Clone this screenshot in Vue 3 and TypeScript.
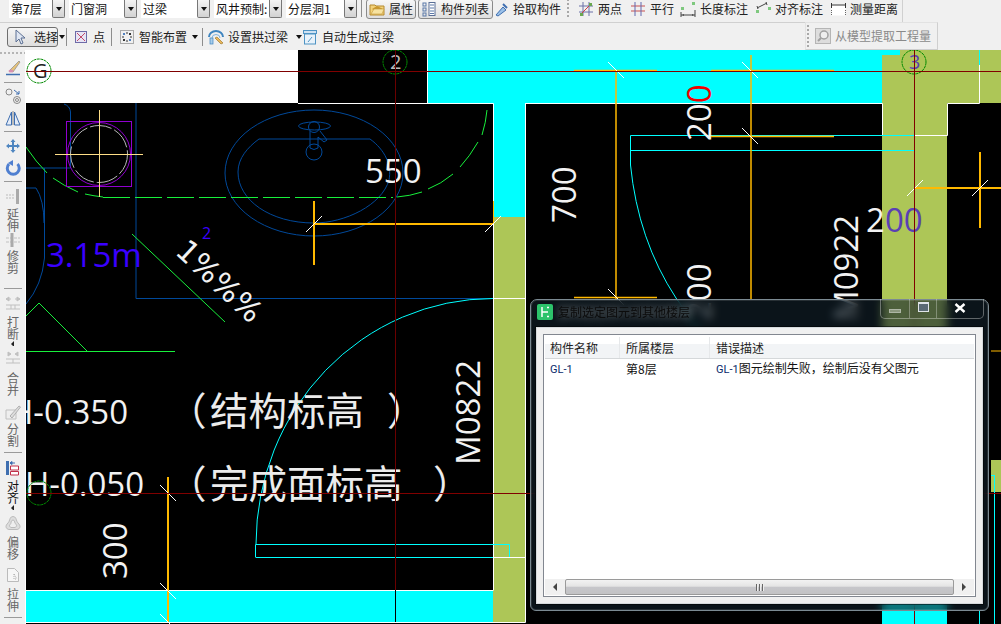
<script setup lang="ts">
const icons: Record<string, string> = {
  folder: '<path d="M1 4h5l1 1h8v9H1z" fill="#f3d27a" stroke="#b58a30"/><path d="M3 8l5-3 6 3-5 4z" fill="#c9982f"/><path d="M2 13l3-5h10l-2 5z" fill="#f7e3a1" stroke="#c49a3c" stroke-width=".6"/>',
  list: '<rect x="2" y="2" width="3" height="3" fill="none" stroke="#5a78a8"/><rect x="2" y="7" width="3" height="3" fill="none" stroke="#5a78a8"/><rect x="2" y="12" width="3" height="3" fill="none" stroke="#5a78a8"/><rect x="8" y="1.5" width="6" height="13" fill="#fff" stroke="#5a6f96"/><path d="M9 4h4M9 7h4M9 10h4M9 12.500h4" stroke="#5a78a8"/>',
  pick: '<path d="M3 14l7-8 3 3-8 6z" fill="#9ac0e8" stroke="#3f6fb0"/><path d="M10 3l4 4" stroke="#3f6fb0" stroke-width="2"/>',
  twoPt: '<path d="M5 1v14M11 1v14M1 5h14M1 11h14" stroke="#6b70a8"/><path d="M2 14L14 2" stroke="#d04040"/><rect x="2" y="12" width="3" height="3" fill="#6aa84f"/><rect x="11" y="2" width="3" height="3" fill="#6aa84f"/>',
  parallel: '<path d="M1 5h14M1 10h14" stroke="#c85050"/><path d="M5 1v14M11 1v14" stroke="#6068b0"/>',
  lenDim: '<rect x="12" y="1" width="3" height="3" fill="#7fc97f"/><rect x="1" y="6" width="3" height="3" fill="#7fc97f"/><path d="M1 11v5M15 9v7M1 14h14" stroke="#444"/><path d="M2 14l2-1v2zM14 14l-2-1v2z" fill="#444"/>',
  alignDim: '<rect x="1" y="9" width="3" height="3" fill="#7fc97f"/><rect x="13" y="6" width="3" height="3" fill="#7fc97f"/><path d="M2 7L12 2M2 5l1 3M11 1l1 3" stroke="#444"/>',
  measure: '<rect x="1.500" y="3.500" width="14" height="11" fill="#fff" stroke="none"/><path d="M1.500 2v5M15.500 2v5M2 4h13" stroke="#333"/><path d="M1.500 9v6" stroke="#666" stroke-dasharray="1 1"/><path d="M15.500 9v6" stroke="#666" stroke-dasharray="1 1"/>',
  cursor: '<path d="M5 1v12l3-3 2 5 2-1-2-5h4z" fill="#dfe6f2" stroke="#5b6f93"/>',
  point: '<rect x="2.500" y="2.500" width="11" height="11" fill="#e7e4f4" stroke="#6e6ba8"/><path d="M4 4l8 8M12 4l-8 8" stroke="#c14a6a"/>',
  smart: '<rect x="1.500" y="1.500" width="13" height="13" fill="none" stroke="#666" stroke-dasharray="1 1"/><path d="M8 3v2M8 11v2M3 8h2M11 8h2" stroke="#333"/><rect x="4" y="4" width="2" height="2" fill="#4f81c0"/><rect x="10" y="10" width="2" height="2" fill="#4f81c0"/><rect x="10" y="4" width="2" height="2" fill="#333"/><rect x="4" y="10" width="2" height="2" fill="#333"/>',
  arch: '<path d="M1 8a7 6 0 0 1 14 0" fill="none" stroke="#3f85c0" stroke-width="2"/><path d="M4 9a4 3.500 0 0 1 8 0" fill="none" stroke="#7fb3df"/><rect x="2" y="9" width="3" height="6" fill="#a8cdea" stroke="#3f85c0" stroke-width=".7"/><path d="M7 9l6 6 2-1-6-6z" fill="#e9b85a" stroke="#a07a30" stroke-width=".7"/>',
  auto: '<rect x="1.500" y="1.500" width="13" height="3" fill="#cfe2f3" stroke="#4f94c4"/><rect x="2.500" y="5" width="11" height="10" fill="#e8f2fa" stroke="#4f94c4"/><path d="M6 13l4-5" stroke="#4f94c4"/>',
  extract: '<rect x=".5" y=".5" width="15" height="15" fill="#ddd" stroke="#b5b5b5"/><circle cx="9" cy="7" r="4" fill="#eee" stroke="#a0a0a0" stroke-width="1.500"/><path d="M6 10l-3 3" stroke="#a0a0a0" stroke-width="2"/>',
  brush: '<path d="M5 10L14 1l1 1-7 10z" fill="#e6c37a" stroke="#8a8a8a" stroke-width=".7"/><ellipse cx="6" cy="11" rx="2.500" ry="1.500" fill="#d890b0"/><path d="M1 14.500h14" stroke="#3f6fb0" stroke-width="1.500"/>',
  offsetC: '<circle cx="4" cy="4" r="3" fill="none" stroke="#888"/><circle cx="12" cy="12" r="3.500" fill="none" stroke="#888"/><circle cx="12" cy="12" r="1.500" fill="none" stroke="#888"/><path d="M9 2l5 4M14 3v3h-3" fill="none" stroke="#3f6fb0"/>',
  mirror: '<path d="M6.500 2v13H1zM9.500 2v13H15z" fill="#e4ecf8" stroke="#3f6fb0"/><path d="M8 1v14" stroke="#888"/>',
  move: '<path d="M8 1l2.500 3h-5zM8 15l2.500-3h-5zM1 8l3-2.500v5zM15 8l-3-2.500v5z" fill="#4f86c0"/><path d="M8 3v10M3 8h10" stroke="#4f86c0" stroke-width="2"/>',
  rotate: '<path d="M4 4a6 6 0 1 0 8.500 0" fill="none" stroke="#4f7fd0" stroke-width="3"/><path d="M8 0v6L3 3z" fill="#4f7fd0"/>',
  extend: '<path d="M1 7h9M1 10h9" stroke="#bbb" stroke-dasharray="2 1"/><path d="M12.500 1v15" stroke="#aaa" stroke-width="3"/>',
  trim: '<path d="M1 5h14M1 9h14" stroke="#c0c0c0" stroke-dasharray="3 1"/><path d="M7 0v14" stroke="#aaa" stroke-width="3"/>',
  breakI: '<path d="M1 3l3-2v4zM15 3l-3-2v4zM1 3h5M15 3h-5M1 9h14M1 13h14M6 9v4M10 9v4" stroke="#c0c0c0" fill="#c0c0c0"/>',
  merge: '<path d="M6 3L3 1v4zM10 3l3-2v4zM1 8h14M1 12h14M8 8v4" stroke="#c0c0c0" fill="#c0c0c0"/>',
  split: '<path d="M1 6h10v9H1z" fill="#eee" stroke="#c0c0c0"/><path d="M5 12L14 2l1.500 1L7 14z" fill="#ddd" stroke="#b0b0b0"/>',
  align: '<rect x="1" y="1" width="3" height="14" fill="#3f6fb0"/><path d="M5.500 6h8v4h-8z" fill="#fff" stroke="#c0304a"/><path d="M5.500 11.500h8v3.500h-8z" fill="#fff" stroke="#c0304a"/><path d="M5 3h5M5 3l2-1.500v3z" stroke="#3f6fb0" fill="#3f6fb0"/>',
  offsetP: '<path d="M8 1.500c3 0 3 3 4 5s3 3 3 5-2 3-3 3H4c-1 0-3-1-3-3s2-3 3-5 1-5 4-5z" fill="#ddd" stroke="#bbb"/><path d="M8 5c1.500 0 1.500 2 2 3s2 2 1.500 3-1 1.500-1.500 1.500H6c-.5 0-1-.5-1.500-1.500S6 9 6 8s.5-3 2-3z" fill="#eee" stroke="#bbb"/>',
  stretch: '<path d="M2.500 1.500h7l4 4v9h-11z" fill="#f6f6f6" stroke="#bbb"/><path d="M9 7v5h3M9 7l3 5" stroke="#aaa" stroke-dasharray="1 1" fill="none"/>'
}

const combos = [
  { label: '第7层', w: 56 },
  { label: '门窗洞', w: 68 },
  { label: '过梁', w: 69 },
  { label: '风井预制:', w: 68 },
  { label: '分层洞1', w: 71 }
]

type RailItem =
  | { sep: true; h: number }
  | { sep?: false; icon: string; h: number; iconH: number; text?: string; caret?: boolean; dark?: boolean }

const rail: RailItem[] = [
  { icon: 'brush', h: 24, iconH: 24 },
  { sep: true, h: 4 },
  { icon: 'offsetC', h: 24, iconH: 24 },
  { icon: 'mirror', h: 20, iconH: 20 },
  { sep: true, h: 6 },
  { icon: 'move', h: 24, iconH: 24 },
  { icon: 'rotate', h: 20, iconH: 20 },
  { sep: true, h: 6 },
  { icon: 'extend', h: 48, iconH: 24, text: '延伸' },
  { icon: 'trim', h: 52, iconH: 18, text: '修剪' },
  { sep: true, h: 8 },
  { icon: 'breakI', h: 54, iconH: 24, text: '打断', caret: true },
  { icon: 'merge', h: 54, iconH: 26, text: '合并' },
  { icon: 'split', h: 48, iconH: 23, text: '分割' },
  { sep: true, h: 8 },
  { icon: 'align', h: 54, iconH: 24, text: '对齐', caret: true, dark: true },
  { icon: 'offsetP', h: 52, iconH: 26, text: '偏移' },
  { icon: 'stretch', h: 52, iconH: 26, text: '拉伸' },
  { sep: true, h: 6 }
]

const greenSegs = [
  'M26 147Q36 162 47 173', 'M53 178Q64 186 78 192', 'M85 194Q94 196 103 197',
  'M397 197Q410 196 422 192', 'M428 189Q441 184 453 174', 'M460 167Q470 156 478 142', 'M482 135Q486 122 487 110'
]
const ticksBack = [[616, 70], [750, 70], [750, 136], [616, 297], [168, 493], [168, 591], [168, 622]]
const ticksFwd = [[314, 224], [493, 224], [915, 188], [980, 188]]
</script>

<template>
  <div class="app">
    <div class="bar bar1">
      <div v-for="c in combos" :key="c.label" class="combo" :style="{ width: c.w + 'px' }">
        <span class="combo-field">{{ c.label }}</span>
        <span class="combo-btn"><i class="tri"></i></span>
      </div>
      <span class="vsep first"></span>
      <button class="tool on prop"><svg viewBox="0 0 16 16" v-html="icons.folder"></svg>属性</button>
      <button class="tool on lst"><svg viewBox="0 0 16 16" v-html="icons.list"></svg>构件列表</button>
      <span class="tool pickup"><svg viewBox="0 0 16 16" v-html="icons.pick"></svg>拾取构件</span>
      <span class="grip"></span>
      <span class="tool two"><svg viewBox="0 0 16 16" v-html="icons.twoPt"></svg>两点</span>
      <span class="tool par"><svg viewBox="0 0 16 16" v-html="icons.parallel"></svg>平行</span>
      <span class="tool dim"><svg viewBox="0 0 16 16" v-html="icons.lenDim"></svg>长度标注</span>
      <span class="tool dim"><svg viewBox="0 0 16 16" v-html="icons.alignDim"></svg>对齐标注</span>
      <span class="tool dim"><svg viewBox="0 0 16 16" v-html="icons.measure"></svg>测量距离</span>
    </div>

    <div class="bar bar2">
      <button class="select"><svg viewBox="0 0 16 16" v-html="icons.cursor"></svg>选择</button>
      <i class="tri drop"></i>
      <span class="vsep lead"></span>
      <span class="tool pt"><svg viewBox="0 0 16 16" v-html="icons.point"></svg>点</span>
      <span class="vsep"></span>
      <span class="tool sm"><svg viewBox="0 0 16 16" v-html="icons.smart"></svg>智能布置<i class="tri"></i></span>
      <span class="vsep"></span>
      <span class="tool ar"><svg viewBox="0 0 16 16" v-html="icons.arch"></svg>设置拱过梁<i class="tri"></i></span>
      <span class="tool au"><svg viewBox="0 0 16 16" v-html="icons.auto"></svg>自动生成过梁</span>
      <div class="extract">
        <span class="grip"></span>
        <span class="tool ex"><svg viewBox="0 0 16 16" v-html="icons.extract"></svg>从模型提取工程量</span>
      </div>
    </div>

    <div class="main">
      <aside class="rail">
        <div class="rail-grip"></div>
        <template v-for="(it, i) in rail" :key="i">
          <div v-if="it.sep" class="rail-sep" :style="{ height: it.h + 'px' }"><span></span></div>
          <div v-else class="rail-item" :class="{ dark: it.dark }" :style="{ height: it.h + 'px' }">
            <div class="rail-icon" :style="{ height: it.iconH + 'px' }">
              <svg viewBox="0 0 16 16" v-html="icons[it.icon]"></svg>
            </div>
            <span v-if="it.text" class="rail-text">{{ it.text }}</span>
            <i v-if="it.caret" class="tri-left"></i>
          </div>
        </template>
      </aside>

      <svg class="cad" viewBox="26 50 975 574" width="975" height="574">
        <rect x="26" y="50" width="975" height="574" fill="#000" />
        <rect x="26" y="50" width="272" height="53" fill="#fff" />
        <rect x="427" y="50" width="473" height="53" fill="#0ff" />
        <rect x="493" y="103" width="32" height="114" fill="#0ff" />
        <rect x="493" y="217" width="32" height="405" fill="#adc657" />
        <rect x="26" y="590" width="467" height="32" fill="#0ff" />
        <path d="M900 50H1001V103H979V103H947V590H882V55H900Z" fill="#adc657" />
        <rect x="882" y="590" width="65" height="34" fill="#0ff" />
        <rect x="991" y="460" width="10" height="32" fill="#adc657" />

        <g fill="none" stroke="#fff" stroke-width="1">
          <path d="M298 103.500H493.500V590.500M525.500 103.500V622.500H26M26 590.500H493M493 298.500H525M493 557.500H525M427.500 50V103" />
          <path d="M525 103.500H882.500V135.500H947.500V103.500H979.500V50" />
        </g>

        <g fill="none" stroke="#00499a" stroke-width="1">
          <path d="M136 103V298.500H493" />
          <path d="M64 104Q70 106 70.500 112V168H26M44.500 168V258Q42 285 26 304M26 188H36Q44 200 44 223" />
          <ellipse cx="314" cy="173" rx="89" ry="63" />
          <path d="M259 139H370C385 150 392 165 389 180C382 205 345 223 314 223C270 223 238 200 238 172C238 158 248 147 259 139Z" />
          <ellipse cx="314.500" cy="126" rx="16" ry="4" />
          <circle cx="314" cy="127" r="5.500" />
          <path d="M310 131V148Q314 151 318 148V137L324 142L327 140L320 131" />
          <circle cx="314" cy="152" r="8" />
        </g>

        <g fill="none" stroke="#18f03c" stroke-width="1">
          <path d="M103 197.500H393" stroke-dasharray="27 5" />
          <path v-for="d in greenSegs" :key="d" :d="d" />
          <path d="M132 234L225 322M26 316L39 303L87 351M26 351.500H175" />
        </g>

        <rect x="66.500" y="121.500" width="65" height="65" fill="none" stroke="#9000d0" />
        <circle cx="99" cy="154" r="31.500" fill="none" stroke="#9000d0" />
        <circle cx="99" cy="154" r="28.500" fill="none" stroke="#b8b8b8" stroke-dasharray="22 3" />
        <path d="M55 154.500H143M99.500 110V197" stroke="#ffdf88" fill="none" />

        <g fill="none" stroke="#0ff" stroke-width="1">
          <path d="M914 135.500H630.500V165Q638 240 676 298L700 332M630 150.500H914" />
          <path d="M256 544A237 246 0 0 1 493 298.500" />
          <path d="M255.500 557.500V544.500H509.500V557M256 557.500H493" />
          <path d="M979.500 610V624M994.500 475V624M991 475.500H994M979.500 50V65" />
        </g>

        <g fill="none" stroke="#ffb900">
          <path d="M574 70.500H657M711 70.500H834M711 136.500H834M574 297.500H657" stroke-width="1.300" />
          <path d="M616 70V300M751 55V300" stroke-width="1.500" />
          <path d="M980 152V228M915 188H1001M314 201V265M314 224H493M168 477V622" stroke-width="2" />
          <path d="M493.500 201V224M201 493.500H208M991 351H1001" />
        </g>
        <g stroke="#fff" stroke-width="1">
          <path v-for="t in ticksBack" :key="t.join()" :d="`M${t[0] - 8} ${t[1] - 8}L${t[0] + 8} ${t[1] + 8}`" />
          <path v-for="t in ticksFwd" :key="t.join()" :d="`M${t[0] - 8} ${t[1] + 8}L${t[0] + 8} ${t[1] - 8}`" />
        </g>

        <g class="big">
          <text x="365" y="183">550</text>
          <text transform="translate(576 223) rotate(-90)">700</text>
          <text transform="translate(711 141) rotate(-90)">20<tspan fill="#f00000">0</tspan></text>
          <text transform="translate(711 320) rotate(-90)">200</text>
          <text transform="translate(858 320) rotate(-90)">M0922</text>
          <text x="866" y="232">2<tspan fill="#5a3fb4">00</tspan></text>
          <text transform="translate(480 465) rotate(-90)">M0822</text>
          <text transform="translate(127 579) rotate(-90)">300</text>
          <text x="9" y="424">H-0.350</text>
          <text x="25" y="496">H-0.050</text>
          <text x="46" y="267" class="blue">3.15m</text>
        </g>
        <text transform="translate(174 253) rotate(43)" class="slope">1%%%</text>
        <text x="202" y="239" class="sup">2</text>
        <g class="cjk">
          <text x="168" y="425">（</text>
          <text x="210" y="425">结构标高</text>
          <text x="387" y="425">）</text>
          <text x="168" y="498">（</text>
          <text x="210" y="498">完成面标高</text>
          <text x="433" y="498">）</text>
        </g>

        <g fill="none" stroke="#008a00" stroke-dasharray="3 .6">
          <circle cx="39" cy="71" r="12" />
          <circle cx="395" cy="62" r="12" />
          <circle cx="914" cy="62" r="12" />
          <circle cx="39" cy="493" r="12" />
        </g>
        <text x="33" y="78" class="axis">G</text>
        <text x="390" y="69" class="axis grey">2</text>
        <text x="909" y="69" class="axis purple">3</text>

        <path d="M26 71.500H1001M26 493.500H1001M914.500 50V624" stroke="#800000" fill="none" />
        <path d="M395.500 50V590" stroke="#6a0000" fill="none" />
        <path d="M395.500 590V622" stroke="#000" fill="none" />
      </svg>
    </div>

    <div class="dialog">
      <div class="title">
        <span class="app-icon">
          <svg viewBox="0 0 16 16"><rect width="16" height="16" rx="2" fill="#2cc36b" /><path d="M5 3v10M5 8h6M10 3.500h2M10 12.500h2" stroke="#fff" stroke-width="1.500" fill="none" /></svg>
        </span>
        <span class="title-text">复制选定图元到其他楼层</span>
        <div class="caps">
          <span class="cap min"><i></i></span>
          <span class="cap max"><i></i></span>
          <span class="cap close">
            <svg viewBox="0 0 12 10" width="12" height="10"><path d="M1.500 1L10.500 9M10.500 1L1.500 9" stroke="#fff" stroke-width="2.400" /></svg>
          </span>
        </div>
      </div>
      <div class="client">
        <div class="list">
          <div class="row head">
            <span class="c1">构件名称</span><span class="c2">所属楼层</span><span class="c3">错误描述</span>
          </div>
          <div class="row body">
            <span class="c1"><b>GL-1</b></span><span class="c2">第8层</span><span class="c3"><b>GL-1</b>图元绘制失败，绘制后没有父图元</span>
          </div>
          <div class="hscroll">
            <span class="arrow"><i class="tri-left big-tri"></i></span>
            <span class="thumb"><i></i><i></i><i></i></span>
            <span class="arrow"><i class="tri-right"></i></span>
          </div>
        </div>
      </div>
    </div>
  </div>
</template>

<style>
html, body { margin: 0; background: #000; }
</style>

<style scoped>
.app {
  position: relative;
  width: 1001px;
  height: 624px;
  overflow: hidden;
  background: #f0f0f0;
  font: 12px/1 "Noto Sans CJK SC", "Liberation Sans", sans-serif;
  color: #222;
  display: flex;
  flex-direction: column;
}
.bar { display: flex; align-items: center; box-sizing: border-box; }
.bar svg { width: 16px; height: 16px; flex: none; display: block; }
.bar1 { height: 23px; padding: 0 0 5px 9px; gap: 4px; border-bottom: 1px solid #d0d0d0; width: 903px; border-right: 1px solid #d0d0d0; }
.bar2 { height: 27px; padding-left: 7px; position: relative; }
.combo { display: flex; height: 18px; align-self: flex-start; background: #fff; flex: none; }
.combo-field { flex: 1; min-width: 0; overflow: hidden; white-space: nowrap; padding: 1px 0 0 2px; color: #111; line-height: 16px; }
.combo-btn { width: 13px; background: linear-gradient(#f4f4f4, #d2d2d2); border: 1px solid #777; border-top: 0; border-radius: 0 0 2px 2px; box-sizing: border-box; display: flex; align-items: center; justify-content: center; }
.tri { display: inline-block; width: 0; height: 0; border: 3px solid transparent; border-top: 4px solid #111; border-bottom: 0; flex: none; }
.vsep { width: 1px; height: 19px; background: #8d8d8d; flex: none; margin: 0 5px; }
.vsep.first { margin: 0; height: 17px; }
.tool { display: inline-flex; align-items: center; gap: 4px; font: inherit; color: #222; padding: 0; border: 0; background: none; white-space: nowrap; flex: none; box-sizing: border-box; }
.tool.on { height: 20px; border: 1px solid #8a8a8a; border-radius: 3px; background: linear-gradient(#f7f7f7, #dfdfdf); padding: 0 1px 0 2px; }
.prop { width: 50px; }
.lst { width: 75px; margin-left: -2px; }
.pickup { margin-left: -4px; width: 68px; }
.grip { width: 2px; height: 20px; flex: none; margin: 0 5px 0 2px; background: repeating-linear-gradient(#a8a8a8 0 2px, transparent 2px 4px); }
.two { width: 44px; }
.par { width: 44px; margin-left: 4px; }
.dim { width: 68px; margin-left: 2px; }
.dim + .dim { margin-left: 3px; }
.select { display: flex; align-items: center; gap: 7px; width: 51px; height: 20px; box-sizing: border-box; border: 1px solid #6f6f6f; border-radius: 3px; background: linear-gradient(#f6f6f6, #dedede); font: inherit; color: #222; padding: 0 0 0 3px; flex: none; white-space: nowrap; }
.tri.drop { margin-left: 1px; }
.bar2 > .vsep { margin: 0 7px 0 4px; height: 18px; }
.bar2 > .vsep.lead { margin-left: 1px; }
.pt { width: 34px; }
.bar2 > .vsep + .pt { margin-left: -1px; }
.sm .tri { margin-left: 1px; }
.ar { margin-left: -2px; }
.ar .tri { border-left-width: 3.500px; border-right-width: 3.500px; margin-left: 4px; }
.au { margin-left: 0; }
.extract { position: absolute; left: 805px; top: -1px; width: 133px; height: 28px; box-sizing: border-box; border: 1px solid #e2e2e2; border-right-color: #cfcfcf; border-bottom-color: #cfcfcf; display: flex; align-items: center; padding-left: 1px; }
.extract .grip { margin: 0 6px 0 0; height: 22px; }
.ex { color: #8a8a8a; }
.main { display: flex; flex: 1; min-height: 0; }
.rail { width: 26px; flex: none; background: #f0f0f0; box-sizing: border-box; border-right: 1px solid #fff; display: flex; flex-direction: column; align-items: stretch; overflow: hidden; }
.rail-grip { height: 6px; flex: none; background: repeating-linear-gradient(90deg, #b5b5b5 0 2px, transparent 2px 4px) center / 100% 2px no-repeat; }
.rail-sep { flex: none; display: flex; align-items: center; justify-content: center; }
.rail-sep span { display: block; width: 18px; height: 1px; background: #9a9a9a; }
.rail-item { flex: none; display: flex; flex-direction: column; align-items: center; color: #666; overflow: hidden; }
.rail-item.dark { color: #111; }
.rail-icon { display: flex; align-items: center; justify-content: center; flex: none; }
.rail-icon svg { width: 16px; height: 16px; display: block; overflow: visible; }
.rail-text { writing-mode: vertical-rl; font-size: 12px; line-height: 12px; flex: none; white-space: nowrap; }
.tri-left { display: inline-block; width: 0; height: 0; border: 3px solid transparent; border-right: 3px solid #222; border-left: 0; margin-top: 1px; flex: none; }
.cad { display: block; flex: none; }
.big text { font: 33px "Open Sans", sans-serif; fill: #f2f2f2; }
.big text.blue { fill: #3a00ff; }
.slope { font: 30px "DejaVu Sans", sans-serif; fill: #f2f2f2; }
.sup { font: 16px "Open Sans", sans-serif; fill: #3a00ff; }
.cjk text { font: 38.500px "Noto Sans CJK SC", sans-serif; fill: #ececec; }
.axis { font: 20px "Open Sans", sans-serif; fill: #222; }
.axis.grey { fill: #bbb; }
.axis.purple { fill: #5a3fb4; }

.dialog { position: absolute; left: 530px; top: 299px; width: 459px; height: 312px; box-sizing: border-box; border: 1px solid #7b8a92; border-radius: 7px 7px 6px 6px; background: rgba(18, 32, 42, .62); backdrop-filter: blur(5px); box-shadow: inset 0 0 0 1px rgba(255, 255, 255, .12); padding: 0 5px 6px; display: flex; flex-direction: column; }
.title { height: 27px; flex: none; display: flex; align-items: center; position: relative; }
.app-icon { width: 16px; height: 16px; margin: -3px 5px 0 1px; flex: none; }
.app-icon svg { display: block; width: 16px; height: 16px; }
.title-text { color: #0c0c0c; margin-top: -3px; text-shadow: 0 0 8px rgba(255, 255, 255, .55); }
.caps { position: absolute; right: -1px; top: -1px; width: 104px; height: 20px; box-sizing: border-box; border: 1px solid rgba(255, 255, 255, .35); border-top: 0; border-radius: 0 0 5px 5px; display: flex; }
.cap { display: flex; align-items: center; justify-content: center; box-sizing: border-box; }
.min { width: 29px; border-right: 1px solid rgba(255, 255, 255, .3); }
.min i { display: block; width: 12px; height: 4px; background: rgba(255, 255, 255, .35); border: 1px solid rgba(255, 255, 255, .3); box-sizing: border-box; margin-top: 4px; }
.max { width: 27px; border-right: 1px solid rgba(255, 255, 255, .3); }
.max i { display: block; width: 11px; height: 10px; box-sizing: border-box; border: 1px solid #dfe4e8; border-top-width: 2px; background: #5a6a74; margin-top: -3px; }
.close { flex: 1; margin-top: -1px; }
.client { flex: 1; min-height: 0; background: #f0f0f0; border: 1px solid #d6dadd; padding: 6px; display: flex; box-shadow: 0 0 0 1px rgba(0, 0, 0, .5); }
.list { flex: 1; background: #fff; border: 1px solid #828790; display: flex; flex-direction: column; min-width: 0; padding: 0 1px 1px; }
.row { display: flex; flex: none; align-items: center; }
.row span { box-sizing: border-box; white-space: nowrap; }
.c1 { width: 75px; padding-left: 5px; }
.c2 { width: 90px; padding-left: 6px; }
.c3 { flex: 1; padding-left: 6px; }
.head { height: 24px; padding-top: 2px; box-sizing: border-box; background: linear-gradient(#fff 0 40%, #f2f4f6 40% 100%); border-bottom: 1px solid #d5d8da; color: #222; }
.head .c1, .head .c2 { border-right: 1px solid #e6e8ea; height: 100%; display: flex; align-items: center; }
.body { height: 20px; color: #111; margin-bottom: auto; }
.body b { font: 11px Roboto, sans-serif; color: #0a2a6b; }
.hscroll { display: flex; height: 16px; background: #f0f0f0; align-items: stretch; flex: none; margin-top: auto; }
.arrow { width: 20px; display: flex; align-items: center; justify-content: center; flex: none; }
.big-tri { border-width: 4px; border-left: 0; border-right-color: #444; margin: 0; }
.tri-right { display: inline-block; width: 0; height: 0; border: 4px solid transparent; border-left: 4px solid #444; border-right: 0; }
.thumb { flex: 1; box-sizing: border-box; border: 1px solid #9a9a9a; border-radius: 2px; background: linear-gradient(#f2f2f2, #e4e4e4 45%, #c6c6ca 50%, #c2c2c4); display: flex; align-items: center; justify-content: center; gap: 1px; }
.thumb i { display: block; width: 1px; height: 7px; background: #666; border-right: 1px solid #eee; }
</style>
